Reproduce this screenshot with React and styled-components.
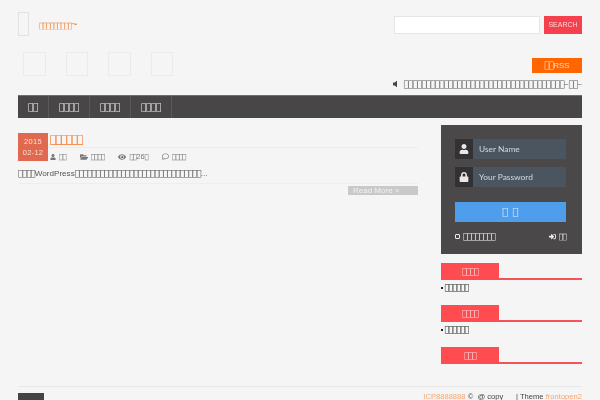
import styled, { createGlobalStyle } from "styled-components";
import {
  FaUser,
  FaLock,
  FaFolderOpen,
  FaEye,
  FaRegComment,
  FaVolumeOff,
  FaSignInAlt,
} from "react-icons/fa";

const GlobalStyle = createGlobalStyle`
  html, body {
    margin: 0;
    height: 400px;
    overflow: hidden;
    background: #f5f5f5;
    font-family: "Liberation Sans", sans-serif;
    font-size: 8px;
    color: #555;
  }
  * { box-sizing: border-box; }
`;

const Page = styled.div`
  width: 564px;
  height: 400px;
  margin: 0 18px;
  overflow: hidden;
  filter: blur(0.25px);
`;

// the reference shows missing-glyph boxes where its font had no CJK
const TofuRun = styled.span`
  font-family: "DejaVu Sans", sans-serif;
  font-size: ${(p) => p.$size}px;
  letter-spacing: ${(p) => p.$pitch - p.$size * 0.6}px;
`;

const Tofu = ({ n, size = 9, pitch = 4.4 }) => (
  <TofuRun $size={size} $pitch={pitch}>
    {"\uE000".repeat(n)}
  </TofuRun>
);

const Header = styled.header`
  height: 52px;
  padding-top: 12px;
  display: flex;
  justify-content: space-between;
  align-items: flex-start;
`;

const Brand = styled.div`
  display: flex;
  align-items: center;
  gap: 10px;
`;

const Logo = styled.div`
  width: 11px;
  height: 24px;
  border: 1px solid #e2e2e2;
`;

const SiteTitle = styled.span`
  color: #f47b32;
  font-size: 10px;
`;

const SearchForm = styled.div`
  display: flex;
  gap: 4px;
  margin-top: 4px;
`;

const SearchInput = styled.div`
  width: 146px;
  height: 18px;
  background: #fff;
  border: 1px solid #e6e6e6;
`;

const SearchButton = styled.div`
  width: 38px;
  height: 18px;
  background: #f5414d;
  color: #f9d9d9;
  font-size: 7px;
  line-height: 18px;
  text-align: center;
`;

const ToolRow = styled.div`
  height: 43px;
  display: flex;
  justify-content: space-between;
  align-items: flex-start;
`;

const Shares = styled.div`
  display: flex;
  gap: 20px;
  padding-left: 5px;
`;

const Share = styled.div`
  width: 22.5px;
  height: 24px;
  border: 1px solid #ebebeb;
`;

const ToolRight = styled.div`
  display: flex;
  flex-direction: column;
  align-items: flex-end;
`;

const RssButton = styled.div`
  width: 50px;
  height: 15px;
  margin-top: 6px;
  background: #ff6600;
  color: #f7d9c0;
  font-size: 8px;
  line-height: 15px;
  text-align: center;
`;

const Notice = styled.div`
  display: flex;
  justify-content: flex-end;
  align-items: center;
  gap: 5px;
  height: 12px;
  margin-top: 5px;
  color: #5c5c5c;
  font-size: 8px;
`;

const Nav = styled.nav`
  height: 23px;
  background: #484646;
  border-top: 1px solid #6f6e6e;
  display: flex;
`;

const NavItem = styled.div`
  padding: 0 10px;
  border-right: 1px solid #5a5858;
  color: #e6e6e6;
  line-height: 21px;
`;

const Main = styled.div`
  display: flex;
  justify-content: space-between;
  margin-top: 7px;
`;

const Content = styled.main`
  width: 400px;
  padding-top: 8px;
`;

const PostHead = styled.div`
  display: flex;
`;

const DateBox = styled.div`
  width: 30px;
  height: 28px;
  padding-top: 3px;
  background: #e0694f;
  color: #f7e2dc;
  font-size: 7.5px;
  line-height: 11px;
  letter-spacing: 0.3px;
  text-align: center;
`;

const PostInfo = styled.div`
  flex: 1;
`;

const PostTitle = styled.div`
  height: 15px;
  padding-left: 2px;
  border-bottom: 1px solid #ececec;
  color: #f47b32;
  line-height: 14px;
`;

const Meta = styled.div`
  display: flex;
  gap: 14px;
  padding: 4px 0 0 2px;
  color: #777;
  font-size: 7.5px;
`;

const MetaItem = styled.span`
  display: inline-flex;
  align-items: center;
  gap: 3px;
`;

const Excerpt = styled.p`
  height: 11px;
  margin: 7px 0 0;
  color: #555;
  font-size: 8.1px;
  line-height: 11px;
`;

const PostFoot = styled.div`
  margin-top: 4px;
  padding-top: 2px;
  border-top: 1px solid #eeeeee;
  display: flex;
  justify-content: flex-end;
`;

const ReadMore = styled.div`
  width: 70px;
  height: 9px;
  padding-left: 5px;
  background: #c9c9c9;
  color: #f2f2f2;
  font-size: 8px;
  line-height: 9px;
`;

const Sidebar = styled.aside`
  width: 141px;
`;

const LoginPanel = styled.div`
  height: 129px;
  padding: 14px 16px 0 14px;
  background: #4a4848;
`;

const Field = styled.div`
  height: 20px;
  margin-bottom: 8px;
  display: flex;
  background: #4b5560;
  color: #d5d8dc;
  font-family: "Lato", sans-serif;
  font-size: 8.4px;
  line-height: 20px;
`;

const FieldIcon = styled.div`
  width: 18px;
  margin-right: 6px;
  background: #323234;
  color: #e8e8e8;
  font-size: 10px;
  display: flex;
  align-items: center;
  justify-content: center;
`;

const LoginButton = styled.div`
  height: 20px;
  margin-top: 15px;
  background: #4f9eec;
  color: #d8eafa;
  line-height: 20px;
  text-align: center;
  word-spacing: 2px;
`;

const LoginFoot = styled.div`
  display: flex;
  justify-content: space-between;
  align-items: center;
  margin-top: 10px;
  color: #eee;
`;

const Remember = styled.span`
  display: inline-flex;
  align-items: center;
  gap: 3px;
`;

const CheckBox = styled.span`
  width: 5px;
  height: 5px;
  border: 1px solid #eee;
  border-radius: 1px;
`;

const Widget = styled.section`
  height: ${(p) => p.$height}px;
  &:first-of-type {
    margin-top: 9px;
  }
`;

const WidgetTitle = styled.div`
  height: 17px;
  border-bottom: 2px solid #f25458;
  margin-bottom: 2px;
`;

const WidgetLabel = styled.div`
  width: 58px;
  height: 17px;
  background: #ff4c50;
  color: #fbd5d5;
  line-height: 17px;
  text-align: center;
`;

const WidgetItem = styled.div`
  display: flex;
  align-items: center;
  gap: 2px;
  color: #222;
  line-height: 12px;
`;

const Bullet = styled.span`
  width: 1.5px;
  height: 1.5px;
  background: #222;
`;

const Footer = styled.footer`
  margin-top: 0;
  border-top: 1px solid #e8e8e8;
  padding-top: 6px;
  display: flex;
  justify-content: space-between;
`;

const BackTop = styled.div`
  width: 26px;
  height: 12px;
  background: #444;
`;

const FooterText = styled.div`
  color: #444;
  font-size: 7.6px;
  line-height: 8px;
`;

const FooterLink = styled.span`
  color: #f6a56f;
`;

const App = () => (
  <Page>
    <GlobalStyle />
    <Header>
      <Brand>
        <Logo />
        <SiteTitle>
          <Tofu n={9} size={7.5} pitch={3.6} />~
        </SiteTitle>
      </Brand>
      <SearchForm>
        <SearchInput />
        <SearchButton>SEARCH</SearchButton>
      </SearchForm>
    </Header>
    <ToolRow>
      <Shares>
        <Share />
        <Share />
        <Share />
        <Share />
      </Shares>
      <ToolRight>
        <RssButton>
          <Tofu n={2} />
          RSS
        </RssButton>
        <Notice>
          <FaVolumeOff size={8} color="#444" />
          <span>
            <Tofu n={36} pitch={4.45} />~<Tofu n={2} />~
          </span>
        </Notice>
      </ToolRight>
    </ToolRow>
    <Nav>
      <NavItem>
        <Tofu n={2} size={9.5} pitch={5} />
      </NavItem>
      <NavItem>
        <Tofu n={4} size={9.5} pitch={5} />
      </NavItem>
      <NavItem>
        <Tofu n={4} size={9.5} pitch={5} />
      </NavItem>
      <NavItem>
        <Tofu n={4} size={9.5} pitch={5} />
      </NavItem>
    </Nav>
    <Main>
      <Content>
        <PostHead>
          <DateBox>
            2015
            <br />
            02-12
          </DateBox>
          <PostInfo>
            <PostTitle>
              <Tofu n={6} size={11} pitch={5.4} />
            </PostTitle>
            <Meta>
              <MetaItem>
                <FaUser size={6} />
                <Tofu n={2} size={7} pitch={3.4} />
              </MetaItem>
              <MetaItem>
                <FaFolderOpen size={8} />
                <Tofu n={4} size={7} pitch={3.4} />
              </MetaItem>
              <MetaItem>
                <FaEye size={8} />
                <span>
                  <Tofu n={2} size={7} pitch={3.4} />
                  26
                  <Tofu n={1} size={7} pitch={3.4} />
                </span>
              </MetaItem>
              <MetaItem>
                <FaRegComment size={7} />
                <Tofu n={4} size={7} pitch={3.4} />
              </MetaItem>
            </Meta>
          </PostInfo>
        </PostHead>
        <Excerpt>
          <Tofu n={4} size={8.5} pitch={4.2} />
          WordPress
          <Tofu n={30} size={8.5} pitch={4.2} />
          ...
        </Excerpt>
        <PostFoot>
          <ReadMore>Read More &gt;</ReadMore>
        </PostFoot>
      </Content>
      <Sidebar>
        <LoginPanel>
          <Field>
            <FieldIcon>
              <FaUser />
            </FieldIcon>
            User Name
          </Field>
          <Field>
            <FieldIcon>
              <FaLock />
            </FieldIcon>
            Your Password
          </Field>
          <LoginButton>
            <Tofu n={1} size={10} pitch={6} /> <Tofu n={1} size={10} pitch={6} />
          </LoginButton>
          <LoginFoot>
            <Remember>
              <CheckBox />
              <Tofu n={8} size={8} pitch={4} />
            </Remember>
            <Remember>
              <FaSignInAlt size={7} />
              <Tofu n={2} size={7.5} pitch={3.6} />
            </Remember>
          </LoginFoot>
        </LoginPanel>
        <Widget $height={42}>
          <WidgetTitle>
            <WidgetLabel>
              <Tofu n={4} size={8} pitch={4} />
            </WidgetLabel>
          </WidgetTitle>
          <WidgetItem>
            <Bullet />
            <Tofu n={6} size={8} pitch={4} />
          </WidgetItem>
        </Widget>
        <Widget $height={42}>
          <WidgetTitle>
            <WidgetLabel>
              <Tofu n={4} size={8} pitch={4} />
            </WidgetLabel>
          </WidgetTitle>
          <WidgetItem>
            <Bullet />
            <Tofu n={6} size={8} pitch={4} />
          </WidgetItem>
        </Widget>
        <Widget $height={39}>
          <WidgetTitle>
            <WidgetLabel>
              <Tofu n={3} size={8} pitch={4} />
            </WidgetLabel>
          </WidgetTitle>
        </Widget>
      </Sidebar>
    </Main>
    <Footer>
      <BackTop />
      <FooterText>
        <FooterLink>ICP8888888</FooterLink> © &nbsp;@ copy &nbsp;&nbsp;&nbsp;&nbsp;&nbsp;| Theme{" "}
        <FooterLink>frontopen2</FooterLink>
      </FooterText>
    </Footer>
  </Page>
);

export default App;
